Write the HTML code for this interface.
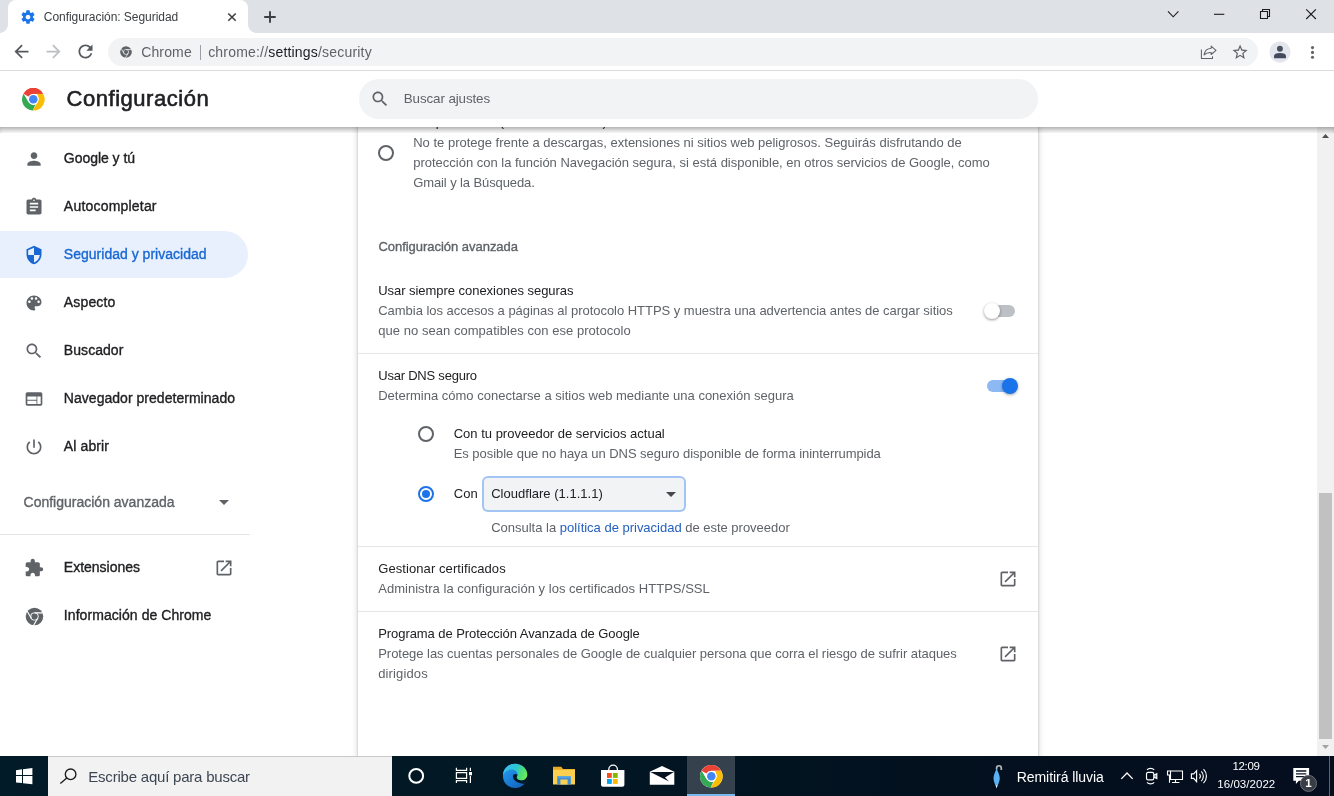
<!DOCTYPE html>
<html lang="es">
<head>
<meta charset="utf-8">
<title>Configuración: Seguridad</title>
<style>
*{box-sizing:border-box;margin:0;padding:0}
html,body{width:1334px;height:796px;overflow:hidden;background:#fff}
body{font-family:"Liberation Sans",sans-serif;color:#202124;position:relative;font-size:13px}
.abs{position:absolute}
.t{position:absolute;white-space:nowrap;line-height:20px;height:20px;z-index:10;will-change:opacity}
.m{-webkit-text-stroke:.35px currentColor}
.m2{-webkit-text-stroke:.6px currentColor}
svg{position:absolute;overflow:visible}

/* ---------- window frame ---------- */
#tabstrip{left:0;top:0;width:1334px;height:33px;background:#dee1e6}
#tab{left:8px;top:0;width:240px;height:33px;background:#fff;border-radius:8px 8px 0 0}
#tab:before,#tab:after{content:"";position:absolute;bottom:0;width:8px;height:8px}
#tab:before{left:-8px;background:radial-gradient(circle at 0 0,transparent 7.5px,#fff 8px)}
#tab:after{right:-8px;background:radial-gradient(circle at 100% 0,transparent 7.5px,#fff 8px)}
#toolbar{left:0;top:33px;width:1334px;height:38px;background:#fff;border-bottom:1px solid #dcdcdc}
#omni{left:108px;top:38px;width:1150px;height:28px;border-radius:14px;background:#f1f3f4}

/* ---------- settings page ---------- */
#hdr{left:0;top:71px;width:1334px;height:56px;background:#fff;z-index:5}
#hshadow{left:0;top:127px;width:1334px;height:6px;z-index:5;box-shadow:inset 0 5px 6px -3px rgba(0,0,0,.4)}
#search{left:359px;top:79px;width:679px;height:40px;border-radius:20px;background:#f1f3f4;z-index:6}
#card{left:358px;top:120px;width:680px;height:636px;background:#fff;box-shadow:0 1px 2px 0 rgba(60,64,67,.3),0 1px 5px 2px rgba(60,64,67,.13)}
.nav{font-size:14.3px;font-weight:bold;color:#202124;left:64px;letter-spacing:-.35px;transform:scaleY(1.02)}
.navsel{left:0;top:231px;width:248px;height:47px;background:#e8f0fe;border-radius:0 24px 24px 0}
.h{font-size:13.3px;color:#202124;left:378px;letter-spacing:-.1px}
.s{font-size:13.3px;color:#5f6368;left:378px;letter-spacing:-.1px}
.sep{left:358px;width:680px;height:1px;background:#e6e6e6}

/* ---------- scrollbar ---------- */
#sbar{left:1317px;top:127px;width:17px;height:629px;background:#f1f1f1}
#thumb{left:1319px;top:493px;width:13px;height:246px;background:#c1c1c1}

/* ---------- taskbar ---------- */
#task{left:0;top:756px;width:1334px;height:40px;background:linear-gradient(90deg,#021b28 0%,#021825 35%,#021320 58%,#040f1e 80%,#050e1e 100%)}
#tsearch{left:48px;top:756px;width:344px;height:40px;background:#f2f2f2;border-top:1px solid #c9c9c9}
</style>
</head>
<body>

<!-- ================= TAB STRIP ================= -->
<div id="tabstrip" class="abs"></div>
<div id="tab" class="abs"></div>
<div id="toolbar" class="abs"></div>
<div id="omni" class="abs"></div>


<!-- tab favicon (gear) -->
<svg style="left:20px;top:9px" width="16" height="16" viewBox="0 0 24 24"><path fill="#1a73e8" d="M19.43 12.98c.04-.32.07-.64.07-.98s-.03-.66-.07-.98l2.11-1.65c.19-.15.24-.42.12-.64l-2-3.46c-.12-.22-.39-.3-.61-.22l-2.49 1c-.52-.4-1.08-.73-1.69-.98l-.38-2.65C14.46 2.18 14.25 2 14 2h-4c-.25 0-.46.18-.49.42l-.38 2.65c-.61.25-1.17.59-1.69.98l-2.49-1c-.23-.09-.49 0-.61.22l-2 3.46c-.13.22-.07.49.12.64l2.11 1.65c-.04.32-.07.65-.07.98s.03.66.07.98l-2.11 1.65c-.19.15-.24.42-.12.64l2 3.46c.12.22.39.3.61.22l2.49-1c.52.4 1.08.73 1.69.98l.38 2.65c.03.24.24.42.49.42h4c.25 0 .46-.18.49-.42l.38-2.65c.61-.25 1.17-.59 1.69-.98l2.49 1c.23.09.49 0 .61-.22l2-3.46c.12-.22.07-.49-.12-.64l-2.11-1.65zM12 15.5c-1.93 0-3.5-1.57-3.5-3.5s1.570-3.500 3.500-3.500 3.500 1.570 3.500 3.500-1.570 3.500-3.500 3.500z"/></svg>
<!-- tab close -->
<svg style="left:226px;top:11px" width="12" height="12" viewBox="0 0 12 12"><path d="M2.3 2.5l7.400 7.200M9.700 2.500l-7.400 7.200" stroke="#3c4043" stroke-width="1.600" fill="none"/></svg>
<!-- new tab plus -->
<svg style="left:263px;top:10px" width="14" height="14" viewBox="0 0 14 14"><path d="M7 1.200v11.500M1.200 7h11.500" stroke="#3c4043" stroke-width="1.900" fill="none"/></svg>
<!-- window controls -->
<svg style="left:1160px;top:0" width="174" height="30" viewBox="0 0 174 30" fill="none" stroke="#1b1b1f" stroke-width="1.100">
 <path d="M8 11.300l5.200 5.500 5.200-5.500"/>
 <path d="M54 14.300h10.300"/>
 <path d="M100.500 11.500h7v7h-7zM102.500 11.500v-2h7v7h-2"/>
 <path d="M146.200 9.300l9.700 9.700M155.900 9.300l-9.700 9.700"/>
</svg>
<!-- back / forward / reload -->
<svg style="left:11px;top:41px" width="21" height="21" viewBox="0 0 24 24"><path fill="#55585c" d="M20 11H7.830l5.590-5.590L12 4l-8 8 8 8 1.410-1.410L7.830 13H20v-2z"/></svg>
<svg style="left:43.200px;top:41px" width="21" height="21" viewBox="0 0 24 24"><path fill="#bcbfc3" d="M4 11h12.170l-5.590-5.590L12 4l8 8-8 8-1.410-1.410L16.170 13H4v-2z"/></svg>
<svg style="left:75.100px;top:41px" width="21" height="21" viewBox="0 0 24 24"><path fill="#55585c" d="M17.650 6.350C16.200 4.900 14.210 4 12 4c-4.420 0-7.990 3.580-7.990 8s3.570 8 7.990 8c3.730 0 6.840-2.550 7.730-6h-2.080c-.82 2.330-3.040 4-5.650 4-3.310 0-6-2.690-6-6s2.690-6 6-6c1.660 0 3.140.69 4.220 1.780L13 11h7V4l-2.350 2.350z"/></svg>
<!-- omnibox chrome icon -->
<svg style="left:118.900px;top:45.100px" width="14" height="14" viewBox="-12 -12 24 24"><circle r="10" fill="#5f6368"/><circle r="4.700" fill="#f1f3f4"/><circle r="3.650" fill="#5f6368"/><path d="M0-4.200H9.900M3.640 2.100L-1.250 10.600M-3.640 2.100L-8.700-6.600" stroke="#f1f3f4" stroke-width="1.300" fill="none"/></svg>
<div class="abs" style="left:199.500px;top:45px;width:1px;height:15px;background:#9aa0a6"></div>
<!-- share -->
<svg style="left:1199px;top:43px" width="20" height="18" viewBox="0 0 20 18" fill="none" stroke="#5f6368" stroke-width="1.050" stroke-linejoin="round"><path d="M2.400 6.400V15.400H13.500V13.200"/><path d="M5.100 11.900C5.500 8.200 8 5.600 12.200 5.200V3.100L17 7.300L12.200 11.500V9.400C9 9.400 6.800 10 5.100 11.900z"/></svg>
<!-- star -->
<svg style="left:1230.900px;top:43px" width="18.200" height="18.200" viewBox="0 0 24 24"><path fill="#5f6368" d="M22 9.240l-7.190-.62L12 2 9.190 8.630 2 9.240l5.460 4.730L5.820 21 12 17.270 18.180 21l-1.630-7.030L22 9.240zM12 15.400l-3.760 2.270 1-4.280-3.320-2.880 4.380-.38L12 6.100l1.710 4.040 4.380.38-3.320 2.880 1 4.280L12 15.400z"/></svg>
<!-- avatar -->
<svg style="left:1269px;top:41px" width="22" height="22" viewBox="0 0 22 22"><circle cx="11" cy="11.100" r="10.600" fill="#e3e6ec"/><circle cx="10.900" cy="7.700" r="2.950" fill="#4a5060"/><path d="M5 17.200V15.200C5 13.200 7.200 12.100 11 12.100S17 13.200 17 15.200V17.200z" fill="#444a5c"/></svg>
<!-- menu dots -->
<svg style="left:1309px;top:44px" width="7" height="16" viewBox="0 0 7 16" fill="#5f6368"><circle cx="3.500" cy="3.600" r="1.550"/><circle cx="3.500" cy="8.400" r="1.550"/><circle cx="3.500" cy="13.300" r="1.550"/></svg>

<!-- ================= SETTINGS ================= -->
<div id="card" class="abs"></div>
<div class="abs navsel"></div>
<svg style="left:24px;top:149px" width="20" height="20" viewBox="0 0 24 24"><path fill="#5f6368" d="M12 12c2.210 0 4-1.790 4-4s-1.790-4-4-4-4 1.790-4 4 1.790 4 4 4zm0 2c-2.670 0-8 1.340-8 4v2h16v-2c0-2.660-5.330-4-8-4z"/></svg>
<svg style="left:24px;top:197px" width="20" height="20" viewBox="0 0 24 24"><path fill="#5f6368" d="M19 3h-4.180C14.400 1.840 13.300 1 12 1c-1.300 0-2.400.840-2.820 2H5c-1.100 0-2 .900-2 2v14c0 1.100.900 2 2 2h14c1.100 0 2-.900 2-2V5c0-1.100-.900-2-2-2zm-7 0c.550 0 1 .450 1 1s-.450 1-1 1-1-.450-1-1 .450-1 1-1zm2 14H7v-2h7v2zm3-4H7v-2h10v2zm0-4H7V7h10v2z"/></svg>
<svg style="left:24px;top:245px" width="20" height="20" viewBox="0 0 24 24"><path fill="#1967d2" d="M12 1L3 5v6c0 5.550 3.840 10.740 9 12 5.160-1.260 9-6.450 9-12V5l-9-4zm0 10.990h7c-.530 4.120-3.280 7.790-7 8.940V12H5V6.300l7-3.110v8.800z"/></svg>
<svg style="left:24px;top:293px" width="20" height="20" viewBox="0 0 24 24"><path fill="#5f6368" d="M12 3c-4.970 0-9 4.030-9 9s4.030 9 9 9c.830 0 1.500-.670 1.500-1.500 0-.390-.150-.740-.390-1.010-.230-.260-.380-.610-.380-.990 0-.830.670-1.500 1.500-1.500H16c2.760 0 5-2.240 5-5 0-4.420-4.030-8-9-8zm-5.500 9c-.830 0-1.500-.670-1.500-1.500S5.670 9 6.500 9 8 9.670 8 10.500 7.330 12 6.500 12zm3-4C8.670 8 8 7.330 8 6.500S8.670 5 9.500 5s1.500.670 1.500 1.500S10.330 8 9.500 8zm5 0c-.830 0-1.500-.670-1.500-1.500S13.670 5 14.500 5s1.500.670 1.500 1.500S15.330 8 14.500 8zm3 4c-.830 0-1.500-.670-1.500-1.500S16.670 9 17.500 9s1.500.670 1.500 1.500-.670 1.500-1.500 1.500z"/></svg>
<svg style="left:24px;top:341px" width="20" height="20" viewBox="0 0 24 24"><path fill="#5f6368" d="M15.500 14h-.790l-.280-.270C15.410 12.590 16 11.110 16 9.500 16 5.910 13.090 3 9.500 3S3 5.910 3 9.500 5.910 16 9.500 16c1.610 0 3.090-.590 4.230-1.570l.270.280v.790l5 4.990L20.490 19l-4.990-5zm-6 0C7.010 14 5 11.990 5 9.500S7.010 5 9.500 5 14 7.010 14 9.500 11.990 14 9.500 14z"/></svg>
<svg style="left:24px;top:389px" width="20" height="20" viewBox="0 0 24 24"><path fill="#5f6368" d="M20 4H4c-1.100 0-1.990.900-1.990 2L2 18c0 1.100.900 2 2 2h16c1.100 0 2-.900 2-2V6c0-1.100-.900-2-2-2zm-5 14H4v-4h11v4zm0-5H4V9h11v4zm5 5h-4V9h4v9z"/></svg>
<svg style="left:24px;top:437px" width="20" height="20" viewBox="0 0 24 24"><path fill="#5f6368" d="M13 3h-2v10h2V3zm4.830 2.170l-1.420 1.420C17.990 7.860 19 9.810 19 12c0 3.870-3.130 7-7 7s-7-3.130-7-7c0-2.190 1.010-4.140 2.580-5.420L6.170 5.170C4.230 6.820 3 9.260 3 12c0 4.970 4.030 9 9 9s9-4.030 9-9c0-2.740-1.230-5.180-3.170-6.830z"/></svg>
<svg style="left:24px;top:558px" width="20" height="20" viewBox="0 0 24 24"><path fill="#5f6368" d="M20.500 11H19V7c0-1.100-.900-2-2-2h-4V3.500C13 2.120 11.880 1 10.500 1S8 2.120 8 3.500V5H4c-1.100 0-1.990.900-1.990 2v3.800H3.500c1.490 0 2.700 1.210 2.700 2.700s-1.210 2.700-2.700 2.700H2V20c0 1.100.900 2 2 2h3.800v-1.500c0-1.490 1.210-2.700 2.700-2.700 1.490 0 2.700 1.210 2.700 2.700V22H17c1.100 0 2-.900 2-2v-4h1.500c1.380 0 2.500-1.120 2.500-2.500S21.880 11 20.500 11z"/></svg>
<svg style="left:23.600px;top:605.700px" width="21" height="21" viewBox="-12 -12 24 24"><circle r="10" fill="#5f6368"/><circle r="4.700" fill="#fff"/><circle r="3.650" fill="#5f6368"/><path d="M0-4.200H9.900M3.640 2.100L-1.250 10.600M-3.640 2.100L-8.700-6.600" stroke="#fff" stroke-width="1.300" fill="none"/></svg>
<svg style="left:218.500px;top:499.500px" width="10" height="5" viewBox="0 0 10 5"><path d="M0 0h10L5 5z" fill="#5f6368"/></svg>
<div class="abs" style="left:0;top:534px;width:250px;height:1px;background:#e4e5e7"></div>
<svg style="left:214px;top:558px" width="20" height="20" viewBox="0 0 24 24"><path fill="#5f6368" d="M19 19H5V5h7V3H5c-1.110 0-2 .900-2 2v14c0 1.100.890 2 2 2h14c1.100 0 2-.900 2-2v-7h-2v7zM14 3v2h3.590l-9.830 9.830 1.410 1.410L19 6.410V10h2V3h-7z"/></svg>
<svg style="left:21.800px;top:87.700px;z-index:10" width="22.600" height="22.600" viewBox="2 2 44 44">
<circle cx="24" cy="24" r="22" fill="#fff"/>
<path d="M24 2a22 22 0 0 1 19.050 11H24a11 11 0 0 0-9.530 5.500L6.800 10.300A22 22 0 0 1 24 2z" fill="#ea4335"/>
<path d="M43.050 13A22 22 0 0 1 22.900 45.970L32.500 29.500A11 11 0 0 0 33.530 18.500L31 13z" fill="#fbbc04"/>
<path d="M4.950 13l9.520 16.500A11 11 0 0 0 24 35a11 11 0 0 0 4.200-.83L22.900 45.970A22 22 0 0 1 4.950 13z" fill="#34a853"/>
<path d="M24 2a22 22 0 0 1 19.050 11H24a11 11 0 0 0-9.530 5.500L4.950 13A22 22 0 0 1 24 2z" fill="#ea4335"/>
<circle cx="24" cy="24" r="10.500" fill="#fff"/><circle cx="24" cy="24" r="8.300" fill="#4285f4"/></svg>
<svg style="left:369.5px;top:89px;z-index:10" width="20" height="20" viewBox="0 0 24 24"><path fill="#5f6368" d="M15.500 14h-.790l-.280-.270C15.410 12.590 16 11.110 16 9.500 16 5.910 13.090 3 9.500 3S3 5.910 3 9.500 5.910 16 9.500 16c1.610 0 3.090-.590 4.230-1.570l.270.280v.790l5 4.990L20.490 19l-4.990-5zm-6 0C7.010 14 5 11.990 5 9.500S7.010 5 9.500 5 14 7.010 14 9.500 11.990 14 9.500 14z"/></svg>
<!-- radios -->
<div class="abs" style="left:378px;top:145px;width:16px;height:16px;border:2px solid #5f6368;border-radius:50%"></div>
<div class="abs" style="left:418px;top:426px;width:16px;height:16px;border:2px solid #5f6368;border-radius:50%"></div>
<div class="abs" style="left:418px;top:486px;width:16px;height:16px;border:2px solid #1a73e8;border-radius:50%"></div>
<div class="abs" style="left:422px;top:490px;width:8px;height:8px;background:#1a73e8;border-radius:50%"></div>
<!-- toggle off -->
<div class="abs" style="left:987px;top:305px;width:28px;height:12px;border-radius:6px;background:#bdc1c6"></div>
<div class="abs" style="left:983.500px;top:303px;width:16px;height:16px;border-radius:50%;background:#fff;box-shadow:0 1px 3px rgba(0,0,0,.42)"></div>
<!-- toggle on -->
<div class="abs" style="left:987px;top:380px;width:28px;height:12px;border-radius:6px;background:#8cb8f3"></div>
<div class="abs" style="left:1002px;top:378px;width:16px;height:16px;border-radius:50%;background:#1a73e8;box-shadow:0 1px 3px rgba(0,0,0,.35)"></div>
<!-- select -->
<div class="abs" style="left:484px;top:478px;width:200px;height:32px;border-radius:4px;background:#f1f3f4;box-shadow:0 0 0 2px #a3c5f4"></div>
<svg style="left:666px;top:492px" width="10" height="5" viewBox="0 0 10 5"><path d="M0 0h10L5 5z" fill="#45484c"/></svg>
<!-- separators -->
<div class="abs sep" style="top:353px"></div>
<div class="abs sep" style="top:546px"></div>
<div class="abs sep" style="top:611px"></div>
<svg style="left:998px;top:569px" width="20" height="20" viewBox="0 0 24 24"><path fill="#5f6368" d="M19 19H5V5h7V3H5c-1.110 0-2 .900-2 2v14c0 1.100.890 2 2 2h14c1.100 0 2-.900 2-2v-7h-2v7zM14 3v2h3.590l-9.830 9.830 1.410 1.410L19 6.410V10h2V3h-7z"/></svg>
<svg style="left:998px;top:644px" width="20" height="20" viewBox="0 0 24 24"><path fill="#5f6368" d="M19 19H5V5h7V3H5c-1.110 0-2 .900-2 2v14c0 1.100.890 2 2 2h14c1.100 0 2-.900 2-2v-7h-2v7zM14 3v2h3.590l-9.830 9.830 1.410 1.410L19 6.410V10h2V3h-7z"/></svg>
<svg style="left:1322px;top:134px;z-index:3" width="7" height="4" viewBox="0 0 7 4"><path d="M3.500 0L7 4H0z" fill="#505050"/></svg>
<svg style="left:1322px;top:745px;z-index:3" width="7" height="4" viewBox="0 0 7 4"><path d="M0 0h7L3.500 4z" fill="#a3a3a3"/></svg>
<div id="hdr" class="abs"></div>
<div id="hshadow" class="abs"></div>
<div id="search" class="abs"></div>

<div class="t" style="left:43.78px;top:6.84px;font-size:12px;color:#3c4043;letter-spacing:-0.041px;">Configuración: Seguridad</div>
<div class="t" style="left:141.16px;top:42.15px;font-size:14px;color:#5f6368;letter-spacing:0.147px;">Chrome</div>
<div class="t" style="left:208.16px;top:42.15px;font-size:14px;color:#5f6368;letter-spacing:0.190px;"><span style='color:#5f6368'>chrome://</span><span style='color:#202124'>settings</span><span style='color:#5f6368'>/security</span></div>
<div class="t m2" style="left:66.58px;top:89.38px;font-size:22px;color:#202124;letter-spacing:0.530px;">Configuración</div>
<div class="t" style="left:403.80px;top:89.36px;font-size:13.4px;color:#5f6368;letter-spacing:-0.116px;">Buscar ajustes</div>
<div class="t m" style="left:63.86px;top:148.15px;font-size:14px;color:#202124;letter-spacing:-0.039px;">Google y tú</div>
<div class="t m" style="left:63.86px;top:196.15px;font-size:14px;color:#202124;letter-spacing:0.200px;">Autocompletar</div>
<div class="t m" style="left:63.86px;top:244.15px;font-size:14px;color:#1967d2;letter-spacing:0.012px;">Seguridad y privacidad</div>
<div class="t m" style="left:63.86px;top:292.15px;font-size:14px;color:#202124;letter-spacing:0.141px;">Aspecto</div>
<div class="t m" style="left:63.86px;top:340.15px;font-size:14px;color:#202124;letter-spacing:0.053px;">Buscador</div>
<div class="t m" style="left:63.86px;top:388.15px;font-size:14px;color:#202124;letter-spacing:0.030px;">Navegador predeterminado</div>
<div class="t m" style="left:63.86px;top:436.15px;font-size:14px;color:#202124;letter-spacing:0.103px;">Al abrir</div>
<div class="t m" style="left:23.56px;top:492.15px;font-size:14px;color:#5f6368;letter-spacing:-0.001px;">Configuración avanzada</div>
<div class="t m" style="left:63.86px;top:557.15px;font-size:14px;color:#202124;letter-spacing:-0.009px;">Extensiones</div>
<div class="t m" style="left:63.86px;top:605.15px;font-size:14px;color:#202124;letter-spacing:0.061px;">Información de Chrome</div>
<div class="t" style="left:413.22px;top:111.50px;font-size:13px;color:#202124;letter-spacing:0.043px;z-index:1;">Sin protección (no recomendado)</div>
<div class="t" style="left:413.22px;top:132.50px;font-size:13px;color:#5f6368;letter-spacing:0.001px;">No te protege frente a descargas, extensiones ni sitios web peligrosos. Seguirás disfrutando de</div>
<div class="t" style="left:413.22px;top:152.50px;font-size:13px;color:#5f6368;letter-spacing:-0.008px;">protección con la función Navegación segura, si está disponible, en otros servicios de Google, como</div>
<div class="t" style="left:413.22px;top:172.50px;font-size:13px;color:#5f6368;letter-spacing:-0.101px;">Gmail y la Búsqueda.</div>
<div class="t m" style="left:378.42px;top:236.50px;font-size:13px;color:#5f6368;letter-spacing:-0.030px;">Configuración avanzada</div>
<div class="t" style="left:378.22px;top:280.50px;font-size:13px;color:#202124;letter-spacing:-0.042px;">Usar siempre conexiones seguras</div>
<div class="t" style="left:378.22px;top:300.50px;font-size:13px;color:#5f6368;letter-spacing:-0.029px;">Cambia los accesos a páginas al protocolo HTTPS y muestra una advertencia antes de cargar sitios</div>
<div class="t" style="left:378.22px;top:320.50px;font-size:13px;color:#5f6368;letter-spacing:0.043px;">que no sean compatibles con ese protocolo</div>
<div class="t" style="left:378.22px;top:365.50px;font-size:13px;color:#202124;letter-spacing:-0.221px;">Usar DNS seguro</div>
<div class="t" style="left:378.22px;top:385.50px;font-size:13px;color:#5f6368;letter-spacing:0.001px;">Determina cómo conectarse a sitios web mediante una conexión segura</div>
<div class="t" style="left:453.72px;top:423.50px;font-size:13px;color:#202124;letter-spacing:0.001px;">Con tu proveedor de servicios actual</div>
<div class="t" style="left:453.72px;top:443.50px;font-size:13px;color:#5f6368;letter-spacing:-0.051px;">Es posible que no haya un DNS seguro disponible de forma ininterrumpida</div>
<div class="t" style="left:453.72px;top:483.50px;font-size:13px;color:#202124;letter-spacing:0.067px;">Con</div>
<div class="t" style="left:491.22px;top:483.50px;font-size:13px;color:#202124;letter-spacing:0.014px;">Cloudflare (1.1.1.1)</div>
<div class="t" style="left:491.22px;top:517.50px;font-size:13px;color:#5f6368;letter-spacing:-0.012px;">Consulta la <span style='color:#2460bd'>política de privacidad</span> de este proveedor</div>
<div class="t" style="left:378.22px;top:558.50px;font-size:13px;color:#202124;letter-spacing:0.083px;">Gestionar certificados</div>
<div class="t" style="left:378.22px;top:578.50px;font-size:13px;color:#5f6368;letter-spacing:0.025px;">Administra la configuración y los certificados HTTPS/SSL</div>
<div class="t" style="left:378.22px;top:623.50px;font-size:13px;color:#202124;letter-spacing:-0.066px;">Programa de Protección Avanzada de Google</div>
<div class="t" style="left:378.22px;top:643.50px;font-size:13px;color:#5f6368;letter-spacing:-0.040px;">Protege las cuentas personales de Google de cualquier persona que corra el riesgo de sufrir ataques</div>
<div class="t" style="left:378.22px;top:663.50px;font-size:13px;color:#5f6368;letter-spacing:0.126px;">dirigidos</div>
<div class="t" style="left:88.30px;top:766.80px;font-size:15px;color:#3d4653;letter-spacing:-0.215px;">Escribe aquí para buscar</div>
<div class="t" style="left:1016.66px;top:767.15px;font-size:14px;color:#ffffff;letter-spacing:-0.049px;">Remitirá lluvia</div>
<div class="t" style="left:1232.51px;top:756.22px;font-size:11.5px;color:#ffffff;letter-spacing:-0.360px;">12:09</div>
<div class="t" style="left:1217.31px;top:774.22px;font-size:11.5px;color:#ffffff;letter-spacing:0.042px;">16/03/2022</div>

<!-- ================= SCROLLBAR ================= -->
<div id="sbar" class="abs"></div>
<div id="thumb" class="abs"></div>

<!-- ================= TASKBAR ================= -->
<div id="task" class="abs"></div>
<div id="tsearch" class="abs"></div>
<!-- windows logo -->
<svg style="left:16px;top:768px" width="17" height="17" viewBox="0 0 17 17" fill="#fff"><path d="M0 2.200L6 1.360V7H0zM7 1.220L16.400-.1V7H7zM0 8H6v7.100L0 14.400zM7 8h9.400v8.300L7 15.210z"/></svg>
<!-- search magnifier -->
<svg style="left:58px;top:766px" width="22" height="20" viewBox="0 0 22 20" fill="none" stroke="#1b1b1b" stroke-width="1.350"><circle cx="12.600" cy="8.300" r="5.300"/><path d="M8.800 12.100L2.300 17.600"/></svg>
<!-- cortana -->
<svg style="left:407px;top:767px" width="18" height="18" viewBox="0 0 18 18" fill="none" stroke="#fff" stroke-width="2"><circle cx="9.200" cy="8.900" r="6.900"/></svg>
<!-- task view -->
<svg style="left:454px;top:766px" width="20" height="20" viewBox="0 0 20 20" fill="none" stroke="#fff" stroke-width="1.200"><path d="M2.400 1.800V4.300H12.600V1.800M2.400 6.700H12.600V12.300H2.400zM2.400 17.100V14.700H12.600V17.100M16.400 1.800V4.900M16.400 10.100V17.100"/><rect x="15" y="6" width="3" height="3.300" fill="#fff" stroke="none"/></svg>
<!-- edge -->
<svg style="left:502px;top:763px" width="26" height="26" viewBox="0 0 26 26">
<defs><linearGradient id="eg1" x1="0" y1="0" x2=".8" y2="1"><stop offset="0" stop-color="#2a9ff0"/><stop offset=".55" stop-color="#1a7fd8"/><stop offset="1" stop-color="#1561b8"/></linearGradient>
<linearGradient id="eg2" x1="0" y1=".3" x2="1" y2=".6"><stop offset="0" stop-color="#38bdf8"/><stop offset=".5" stop-color="#2cc6cf"/><stop offset=".8" stop-color="#4fe070"/><stop offset="1" stop-color="#6cec5c"/></linearGradient></defs>
<circle cx="13.100" cy="12.900" r="12.200" fill="url(#eg1)"/>
<path d="M10.900 13C10.900 10.600 14.900 10.200 15.500 12.400C15.900 14.200 15.100 15.400 16.600 16.500C18.600 17.800 22.300 17.600 26 12L26.500 20.700C22 21.200 17.200 20.600 14.200 18.600C11.900 17.100 10.900 15 10.900 13z" fill="#051a28"/>
<path d="M.9 11.900C1.500 5.400 6.500.700 13.100.700C20.100.700 25.300 5.900 25.300 11.400C25.300 14.900 22.600 17.200 19.500 17.200C17 17.200 14.700 16.300 14.700 14.600C14.700 13.600 15.700 13.200 15.700 11.600C15.700 9 13 6.500 9.600 6.500C5.500 6.500 2.400 9 .9 11.900z" fill="url(#eg2)"/>
</svg>
<!-- explorer -->
<svg style="left:552px;top:765px" width="24" height="21" viewBox="0 0 24 21"><path d="M1 1.800h8.300l1.700 2.300h12v3H1z" fill="#e8a725"/><path d="M1 4.700h22v14.800H1z" fill="#fbd04f"/><path d="M5.200 11.300h13.600v8.200H5.200z" fill="#3d8fd6"/><path d="M8.400 14.500h7.200v5H8.400z" fill="#fbd04f"/><path d="M5.200 11.300h13.600v1.500H5.200z" fill="#5aa7e6"/></svg>
<!-- store -->
<svg style="left:600px;top:763px" width="26" height="25" viewBox="0 0 26 25"><path d="M8.800 8.200V6.400a4.300 4.300 0 0 1 8.600 0v1.800" fill="none" stroke="#fff" stroke-width="1.300"/><path d="M1 7h23.400v14.800c0 1.100-.9 2-2 2H3c-1.100 0-2-.9-2-2z" fill="#fff"/><rect x="7" y="10" width="4.800" height="4.900" fill="#f25022"/><rect x="12.900" y="10" width="4.800" height="4.900" fill="#7fba00"/><rect x="7" y="16" width="4.800" height="4.900" fill="#00a4ef"/><rect x="12.900" y="16" width="4.800" height="4.900" fill="#ffb900"/></svg>
<!-- mail -->
<svg style="left:649px;top:765px" width="26" height="21" viewBox="0 0 26 21"><path d="M.8 6.700L13 .900l12.300 5.800v13.100H.8z" fill="#fff"/><path d="M1.300 7.100H24.900L16 12.400l4.100 4.200z" fill="#06121f"/></svg>
<!-- chrome active -->
<div class="abs" style="left:687px;top:756px;width:48px;height:40px;background:#35414c"></div>
<div class="abs" style="left:687px;top:794px;width:48px;height:2px;background:#76b9ed"></div>
<svg style="left:699.500px;top:764.700px" width="22.600" height="22.600" viewBox="2 2 44 44">
<circle cx="24" cy="24" r="22" fill="#fff"/>
<path d="M24 2a22 22 0 0 1 19.050 11H24a11 11 0 0 0-9.530 5.500L4.950 13A22 22 0 0 1 24 2z" fill="#ea4335"/>
<path d="M43.050 13A22 22 0 0 1 22.900 45.970L32.500 29.500A11 11 0 0 0 33.530 18.500L31 13z" fill="#fbbc04"/>
<path d="M4.950 13l9.520 16.500A11 11 0 0 0 24 35a11 11 0 0 0 4.200-.830L22.900 45.970A22 22 0 0 1 4.950 13z" fill="#34a853"/>
<circle cx="24" cy="24" r="10.500" fill="#fff"/><circle cx="24" cy="24" r="8.300" fill="#4285f4"/></svg>
<!-- umbrella -->
<svg style="left:990px;top:764px" width="14" height="25" viewBox="0 0 14 25"><path d="M6.600 5.800V4.200C6.600.900 11.300.900 11.300 4.200V6" fill="none" stroke="#b3b7bb" stroke-width="1.700"/><path d="M6.600 5C5.200 7.500 3.500 11 3.500 14.500C3.500 17.500 5.400 21 6.600 24.200C7.800 21 9.800 17.500 9.800 14.500C9.800 11 8 7.500 6.600 5z" fill="#5ab2f2"/><path d="M5.700 21.300L6.600 24.200L7.500 21.300z" fill="#e4edf5"/></svg>
<!-- tray chevron -->
<svg style="left:1119px;top:770px" width="16" height="11" viewBox="0 0 16 11" fill="none" stroke="#fff" stroke-width="1.300"><path d="M2.300 8.900l5.700-5.900 5.700 5.900"/></svg>
<!-- meet now -->
<svg style="left:1144px;top:766px" width="16" height="20" viewBox="0 0 16 20" fill="none" stroke="#fff" stroke-width="1.150"><rect x="2.500" y="6.300" width="7.300" height="7.600" rx="1.700"/><path d="M9.800 9.200l3-1.500v4.800l-3-1.500" fill="#fff" fill-opacity=".55"/><path d="M3 3.800c1.700-1.900 5.500-1.900 7.200 0M3 16.400c1.700 1.900 5.500 1.900 7.200 0"/></svg>
<!-- network -->
<svg style="left:1165px;top:768px" width="20" height="17" viewBox="0 0 20 17" fill="none" stroke="#fff" stroke-width="1.100"><path d="M5.500 3H17.500v8.500H5.500V7M7 14.500h7.400M10.500 11.500v3"/><path d="M2.500 3h3v4h-3zM4.500 7v7.800"/></svg>
<!-- volume -->
<svg style="left:1189px;top:767px" width="21" height="18" viewBox="0 0 21 18" fill="none" stroke="#fff" stroke-width="1.150"><path d="M2.400 6.900h2.300L7.600 3.700v11L4.700 11.400H2.400z"/><path d="M10.400 6.900c1.300 1.200 1.300 3.400 0 4.600M12.300 4.300c2.700 2.700 2.700 7.100 0 9.800M14.500 2.200c3.900 3.900 3.900 10 0 13.900"/></svg>
<!-- notifications -->
<svg style="left:1292px;top:766px" width="28" height="28" viewBox="0 0 28 28"><path d="M1.300 2h15.800v12.800H6.800L3.900 18v-3.200H1.300z" fill="#fff"/><path d="M4 5h10.300M4 7.800h10.300M4 10.600h10.300" stroke="#0a1624" stroke-width="1.300"/><circle cx="16.500" cy="17.400" r="8" fill="#383d45" stroke="#6b7078" stroke-width="1"/></svg>
<div class="t" style="left:1305.300px;top:772.800px;font-size:11.500px;font-weight:bold;color:#fff;z-index:12">1</div>
<div class="abs" style="left:1329px;top:756px;width:1px;height:40px;background:#5d6670"></div>


</body>
</html>
